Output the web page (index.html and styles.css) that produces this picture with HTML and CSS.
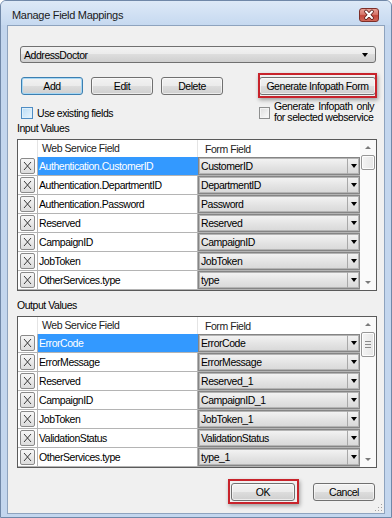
FILE: index.html
```html
<!DOCTYPE html>
<html lang="en">
<head>
    <meta charset="UTF-8">
    <title>Manage Field Mappings</title>
    <link rel="stylesheet" href="styles.css">
</head>
<body>

<div class="window">
    <!-- Title bar -->
    <div class="titlebar">
        <span class="title">Manage Field Mappings</span>
        <span class="close-btn">
            <svg width="20" height="14" viewBox="0 0 20 14">
                <path d="M7 3.5L13 10M13 3.5L7 10" stroke="#5a1d18" stroke-width="3.6" stroke-linecap="round"/>
                <path d="M7 3.5L13 10M13 3.5L7 10" stroke="#fff" stroke-width="2" stroke-linecap="round"/>
            </svg>
        </span>
    </div>

    <div class="client">
        <!-- Web service picker -->
        <div class="service-select">
            <span>AddressDoctor</span>
            <span class="tri"></span>
        </div>

        <!-- Toolbar -->
        <div class="toolbar">
            <button class="btn btn-default">Add</button>
            <button class="btn">Edit</button>
            <button class="btn">Delete</button>
            <button class="btn btn-generate marked">Generate Infopath Form</button>
        </div>

        <!-- Options -->
        <div class="options">
            <label class="check"><span class="box box-hot"></span>Use existing fields</label>
            <label class="check check-wrap">
                <span class="box"></span>
                <span class="wrap-text">
                    <span class="line-justify">Generate Infopath only</span>
                    <span>for selected webservice</span>
                </span>
            </label>
        </div>

        <!-- Input values -->
        <div class="section-label">Input Values</div>
        <div class="grid">
            <div class="grid-body">
                <div class="grid-head">
                    <div class="h-x"></div>
                    <div class="h-name">Web Service Field</div>
                    <div class="h-form">Form Field</div>
                </div>
                <div class="row selected">
                    <div class="cell-x"><span class="xbtn"><svg width="9" height="10" viewBox="0 0 9 10"><path d="M1 1L8 9M8 1L1 9" stroke="#3a3a3a"/></svg></span></div>
                    <div class="cell-name">Authentication.CustomerID</div>
                    <div class="cell-form"><div class="combo"><span class="combo-text">CustomerID</span><span class="combo-btn"><span class="tri"></span></span></div></div>
                </div>
                <div class="row">
                    <div class="cell-x"><span class="xbtn"><svg width="9" height="10" viewBox="0 0 9 10"><path d="M1 1L8 9M8 1L1 9" stroke="#3a3a3a"/></svg></span></div>
                    <div class="cell-name">Authentication.DepartmentID</div>
                    <div class="cell-form"><div class="combo"><span class="combo-text">DepartmentID</span><span class="combo-btn"><span class="tri"></span></span></div></div>
                </div>
                <div class="row">
                    <div class="cell-x"><span class="xbtn"><svg width="9" height="10" viewBox="0 0 9 10"><path d="M1 1L8 9M8 1L1 9" stroke="#3a3a3a"/></svg></span></div>
                    <div class="cell-name">Authentication.Password</div>
                    <div class="cell-form"><div class="combo"><span class="combo-text">Password</span><span class="combo-btn"><span class="tri"></span></span></div></div>
                </div>
                <div class="row">
                    <div class="cell-x"><span class="xbtn"><svg width="9" height="10" viewBox="0 0 9 10"><path d="M1 1L8 9M8 1L1 9" stroke="#3a3a3a"/></svg></span></div>
                    <div class="cell-name">Reserved</div>
                    <div class="cell-form"><div class="combo"><span class="combo-text">Reserved</span><span class="combo-btn"><span class="tri"></span></span></div></div>
                </div>
                <div class="row">
                    <div class="cell-x"><span class="xbtn"><svg width="9" height="10" viewBox="0 0 9 10"><path d="M1 1L8 9M8 1L1 9" stroke="#3a3a3a"/></svg></span></div>
                    <div class="cell-name">CampaignID</div>
                    <div class="cell-form"><div class="combo"><span class="combo-text">CampaignID</span><span class="combo-btn"><span class="tri"></span></span></div></div>
                </div>
                <div class="row">
                    <div class="cell-x"><span class="xbtn"><svg width="9" height="10" viewBox="0 0 9 10"><path d="M1 1L8 9M8 1L1 9" stroke="#3a3a3a"/></svg></span></div>
                    <div class="cell-name">JobToken</div>
                    <div class="cell-form"><div class="combo"><span class="combo-text">JobToken</span><span class="combo-btn"><span class="tri"></span></span></div></div>
                </div>
                <div class="row">
                    <div class="cell-x"><span class="xbtn"><svg width="9" height="10" viewBox="0 0 9 10"><path d="M1 1L8 9M8 1L1 9" stroke="#3a3a3a"/></svg></span></div>
                    <div class="cell-name">OtherServices.type</div>
                    <div class="cell-form"><div class="combo"><span class="combo-text">type</span><span class="combo-btn"><span class="tri"></span></span></div></div>
                </div>
            </div>
            <div class="vscroll">
                <span class="sb-arrow"><span class="tri-up"></span></span>
                <div class="sb-track"><span class="sb-thumb thumb-short"></span></div>
                <span class="sb-arrow"><span class="tri-down"></span></span>
            </div>
        </div>

        <!-- Output values -->
        <div class="section-label">Output Values</div>
        <div class="grid">
            <div class="grid-body">
                <div class="grid-head">
                    <div class="h-x"></div>
                    <div class="h-name">Web Service Field</div>
                    <div class="h-form">Form Field</div>
                </div>
                <div class="row selected">
                    <div class="cell-x"><span class="xbtn"><svg width="9" height="10" viewBox="0 0 9 10"><path d="M1 1L8 9M8 1L1 9" stroke="#3a3a3a"/></svg></span></div>
                    <div class="cell-name">ErrorCode</div>
                    <div class="cell-form"><div class="combo"><span class="combo-text">ErrorCode</span><span class="combo-btn"><span class="tri"></span></span></div></div>
                </div>
                <div class="row">
                    <div class="cell-x"><span class="xbtn"><svg width="9" height="10" viewBox="0 0 9 10"><path d="M1 1L8 9M8 1L1 9" stroke="#3a3a3a"/></svg></span></div>
                    <div class="cell-name">ErrorMessage</div>
                    <div class="cell-form"><div class="combo"><span class="combo-text">ErrorMessage</span><span class="combo-btn"><span class="tri"></span></span></div></div>
                </div>
                <div class="row">
                    <div class="cell-x"><span class="xbtn"><svg width="9" height="10" viewBox="0 0 9 10"><path d="M1 1L8 9M8 1L1 9" stroke="#3a3a3a"/></svg></span></div>
                    <div class="cell-name">Reserved</div>
                    <div class="cell-form"><div class="combo"><span class="combo-text">Reserved_1</span><span class="combo-btn"><span class="tri"></span></span></div></div>
                </div>
                <div class="row">
                    <div class="cell-x"><span class="xbtn"><svg width="9" height="10" viewBox="0 0 9 10"><path d="M1 1L8 9M8 1L1 9" stroke="#3a3a3a"/></svg></span></div>
                    <div class="cell-name">CampaignID</div>
                    <div class="cell-form"><div class="combo"><span class="combo-text">CampaignID_1</span><span class="combo-btn"><span class="tri"></span></span></div></div>
                </div>
                <div class="row">
                    <div class="cell-x"><span class="xbtn"><svg width="9" height="10" viewBox="0 0 9 10"><path d="M1 1L8 9M8 1L1 9" stroke="#3a3a3a"/></svg></span></div>
                    <div class="cell-name">JobToken</div>
                    <div class="cell-form"><div class="combo"><span class="combo-text">JobToken_1</span><span class="combo-btn"><span class="tri"></span></span></div></div>
                </div>
                <div class="row">
                    <div class="cell-x"><span class="xbtn"><svg width="9" height="10" viewBox="0 0 9 10"><path d="M1 1L8 9M8 1L1 9" stroke="#3a3a3a"/></svg></span></div>
                    <div class="cell-name">ValidationStatus</div>
                    <div class="cell-form"><div class="combo"><span class="combo-text">ValidationStatus</span><span class="combo-btn"><span class="tri"></span></span></div></div>
                </div>
                <div class="row">
                    <div class="cell-x"><span class="xbtn"><svg width="9" height="10" viewBox="0 0 9 10"><path d="M1 1L8 9M8 1L1 9" stroke="#3a3a3a"/></svg></span></div>
                    <div class="cell-name">OtherServices.type</div>
                    <div class="cell-form"><div class="combo"><span class="combo-text">type_1</span><span class="combo-btn"><span class="tri"></span></span></div></div>
                </div>
            </div>
            <div class="vscroll">
                <span class="sb-arrow"><span class="tri-up"></span></span>
                <div class="sb-track"><span class="sb-thumb thumb-long"><i></i><i></i><i></i></span></div>
                <span class="sb-arrow"><span class="tri-down"></span></span>
            </div>
        </div>

        <!-- Dialog buttons -->
        <div class="footer">
            <button class="btn btn-ok marked">OK</button>
            <button class="btn">Cancel</button>
        </div>

        <svg class="grip" width="8" height="8" viewBox="0 0 8 8">
            <rect x="6" y="0" width="1" height="1" fill="#a0a0a0"/>
            <rect x="3" y="3" width="1" height="1" fill="#a0a0a0"/>
            <rect x="6" y="3" width="1" height="1" fill="#a0a0a0"/>
            <rect x="0" y="6" width="1" height="1" fill="#a0a0a0"/>
            <rect x="3" y="6" width="1" height="1" fill="#a0a0a0"/>
            <rect x="6" y="6" width="1" height="1" fill="#a0a0a0"/>
        </svg>
    </div>
</div>

</body>
</html>
```

FILE: styles.css
```css
/* Reset */
*, *::before, *::after {
    margin: 0;
    padding: 0;
    box-sizing: border-box;
}

:root {
    --face: #f0f0f0;
    --frame: #c3d6ee;
    --grid-line: #b4b4b4;
    --select: #3399ff;
    --mark: #c8232b;
    --ui-font: "Liberation Sans", Arial, sans-serif;
}

body {
    width: 392px;
    height: 518px;
    overflow: hidden;
    background: #fff;
    font-family: var(--ui-font);
    font-size: 10.5px;
    letter-spacing: -0.45px;
    color: #000;
}

/* Window frame */
.window {
    width: 392px;
    height: 518px;
    display: flex;
    flex-direction: column;
    background: var(--frame);
    border: 1px solid #7088a8;
    border-radius: 6px 6px 0 0;
}

.titlebar {
    height: 24px;
    display: flex;
    align-items: flex-start;
    justify-content: space-between;
    padding: 0 12px 0 11px;
    background: linear-gradient(#dde9f7, #c6d9f0);
    border-radius: 5px 5px 0 0;
}

.title {
    font-size: 11px;
    letter-spacing: -0.3px;
    line-height: 14px;
    margin-top: 7px;
    color: #1a1a1a;
}

.close-btn {
    width: 20px;
    height: 14px;
    margin-top: 7px;
    border: 1px solid #7e2f28;
    border-radius: 3px;
    background: linear-gradient(#e8a197 0%, #d7766a 45%, #c2463a 55%, #d0685a 100%);
    display: flex;
    align-items: center;
    justify-content: center;
}

.close-btn svg {
    margin: -1px;
}

/* Client area */
.client {
    flex: 1;
    position: relative;
    margin: 0 6px 3px 6px;
    border: 1px solid #8ea3be;
    background: var(--face);
    display: flex;
    flex-direction: column;
}

.service-select {
    height: 17px;
    margin: 20px 8px 0 12px;
    padding: 0 7px 0 3px;
    border: 1px solid #707070;
    border-radius: 3px;
    background: linear-gradient(#f2f2f2 0%, #ebebeb 49%, #dddddd 50%, #cfcfcf 100%);
    display: flex;
    align-items: center;
    justify-content: space-between;
}

.tri {
    width: 0;
    height: 0;
    border-style: solid;
    border-width: 4px 3.5px 0 3.5px;
    border-color: #000 transparent transparent transparent;
}

/* Buttons */
.btn {
    height: 18px;
    font-family: var(--ui-font);
    font-size: 10.5px;
    letter-spacing: -0.45px;
    white-space: nowrap;
    color: #000;
    border: 1px solid #707070;
    border-radius: 3px;
    background: linear-gradient(#f2f2f2 0%, #ebebeb 49%, #dddddd 50%, #cfcfcf 100%);
    box-shadow: inset 0 0 0 1px rgba(255, 255, 255, 0.6);
    position: relative;
}

.btn-default {
    border-color: #3c7fb1;
    box-shadow: inset 0 0 0 1px #a6d7f4;
}

.toolbar {
    display: flex;
    gap: 8px;
    margin: 14px 8px 0 13px;
}

.toolbar .btn {
    width: 62px;
}

.toolbar .btn-generate {
    width: 117px;
    margin-left: auto;
}

.marked::after {
    content: "";
    position: absolute;
    top: -5px;
    right: -2px;
    bottom: -4px;
    left: -2px;
    border: 2px solid var(--mark);
    box-shadow: 1px 2px 4px rgba(0, 0, 0, 0.35);
    pointer-events: none;
}

.btn-ok.marked::after {
    right: -5px;
    left: -4px;
}

/* Options */
.options {
    display: flex;
    justify-content: space-between;
    margin: 6px 10px 0 13px;
    height: 22px;
}

.check {
    display: flex;
    align-items: flex-start;
    gap: 4px;
    line-height: 11px;
}

.check:first-child {
    padding-top: 6px;
    line-height: 12px;
}

.box {
    width: 12px;
    height: 12px;
    border: 1px solid #8e8f8f;
    background: linear-gradient(135deg, #dcdcdc, #fbfbfb);
    box-shadow: inset 0 0 0 1px #f4f4f4;
    flex-shrink: 0;
}

.box-hot {
    border-color: #4f8dc4;
    background: linear-gradient(135deg, #b9dcf6, #e9f5fd);
    box-shadow: inset 0 0 0 1px #def0fb;
}

.check-wrap .box {
    width: 11px;
    height: 12px;
    margin-top: 6px;
}

.wrap-text {
    width: 100px;
    display: flex;
    flex-direction: column;
    white-space: nowrap;
}

.line-justify {
    text-align: justify;
    text-align-last: justify;
}

.section-label {
    margin-left: 9px;
    line-height: 11px;
}

.grid + .section-label {
    margin-top: 9px;
}

/* Grids */
.grid {
    height: 152px;
    margin: 5px 7px 0 9px;
    border: 1px solid #5a5a5a;
    background: #fff;
    display: flex;
}

.grid-body {
    width: 342px;
    display: flex;
    flex-direction: column;
}

.grid-head {
    height: 17px;
    display: flex;
    align-items: center;
    color: #222;
}

.h-x {
    width: 20px;
    height: 100%;
    border-right: 1px solid #e4e4e4;
}

.h-name {
    width: 160px;
    padding-left: 4px;
    border-right: 1px solid #e4e4e4;
    line-height: 17px;
}

.h-form {
    width: 162px;
    padding-left: 7px;
}

.row {
    height: 19px;
    display: flex;
    border-bottom: 1px solid var(--grid-line);
}

.cell-x {
    width: 20px;
    border-right: 1px solid var(--grid-line);
    display: flex;
    align-items: center;
    justify-content: center;
}

.xbtn {
    width: 15px;
    height: 16px;
    border: 1px solid #8a8a8a;
    border-radius: 2px;
    background: linear-gradient(#f6f6f6, #dcdcdc);
    display: flex;
    align-items: center;
    justify-content: center;
}

.cell-name {
    width: 160px;
    padding-left: 1px;
    line-height: 18px;
    border-right: 1px solid var(--grid-line);
    white-space: nowrap;
}

.row.selected .cell-name {
    background: var(--select);
    color: #fff;
    border-right-color: var(--select);
}

.cell-form {
    width: 162px;
}

.combo {
    height: 18px;
    width: 162px;
    border: 1px solid #858585;
    box-shadow: inset 0 0 0 1px #b4b4b4;
    background: linear-gradient(#f4f4f4, #e2e2e2 60%, #d8d8d8);
    display: flex;
}

.combo-text {
    flex: 1;
    padding-left: 2px;
    line-height: 16px;
    white-space: nowrap;
}

.combo-btn {
    width: 12px;
    border-left: 1px solid #a8a8a8;
    display: flex;
    align-items: center;
    justify-content: center;
}

/* Scrollbar */
.vscroll {
    width: 16px;
    display: flex;
    flex-direction: column;
    background: #fafafa;
}

.sb-arrow {
    height: 15px;
    display: flex;
    align-items: center;
    justify-content: center;
}

.tri-up, .tri-down {
    width: 0;
    height: 0;
    border-style: solid;
}

.tri-up {
    border-width: 0 3px 3px 3px;
    border-color: transparent transparent #7a7a7a transparent;
}

.tri-down {
    border-width: 3px 3px 0 3px;
    border-color: #7a7a7a transparent transparent transparent;
}

.sb-track {
    flex: 1;
    padding: 0 1px;
}

.sb-thumb {
    display: flex;
    flex-direction: column;
    align-items: center;
    justify-content: center;
    gap: 2px;
    width: 14px;
    border: 1px solid #979797;
    border-radius: 2px;
    background: linear-gradient(90deg, #f4f4f4, #e6e6e6);
    box-shadow: inset 0 0 0 1px #fdfdfd;
}

.thumb-short {
    height: 15px;
}

.thumb-long {
    height: 25px;
}

.sb-thumb i {
    width: 6px;
    height: 1px;
    background: #8a8a8a;
}

/* Footer */
.footer {
    display: flex;
    justify-content: flex-end;
    gap: 18px;
    margin: 15px 9px 0 0;
}

.footer .btn {
    width: 62px;
}

.footer .btn-ok {
    width: 64px;
}

.grip {
    position: absolute;
    right: 1px;
    bottom: 1px;
}
```
